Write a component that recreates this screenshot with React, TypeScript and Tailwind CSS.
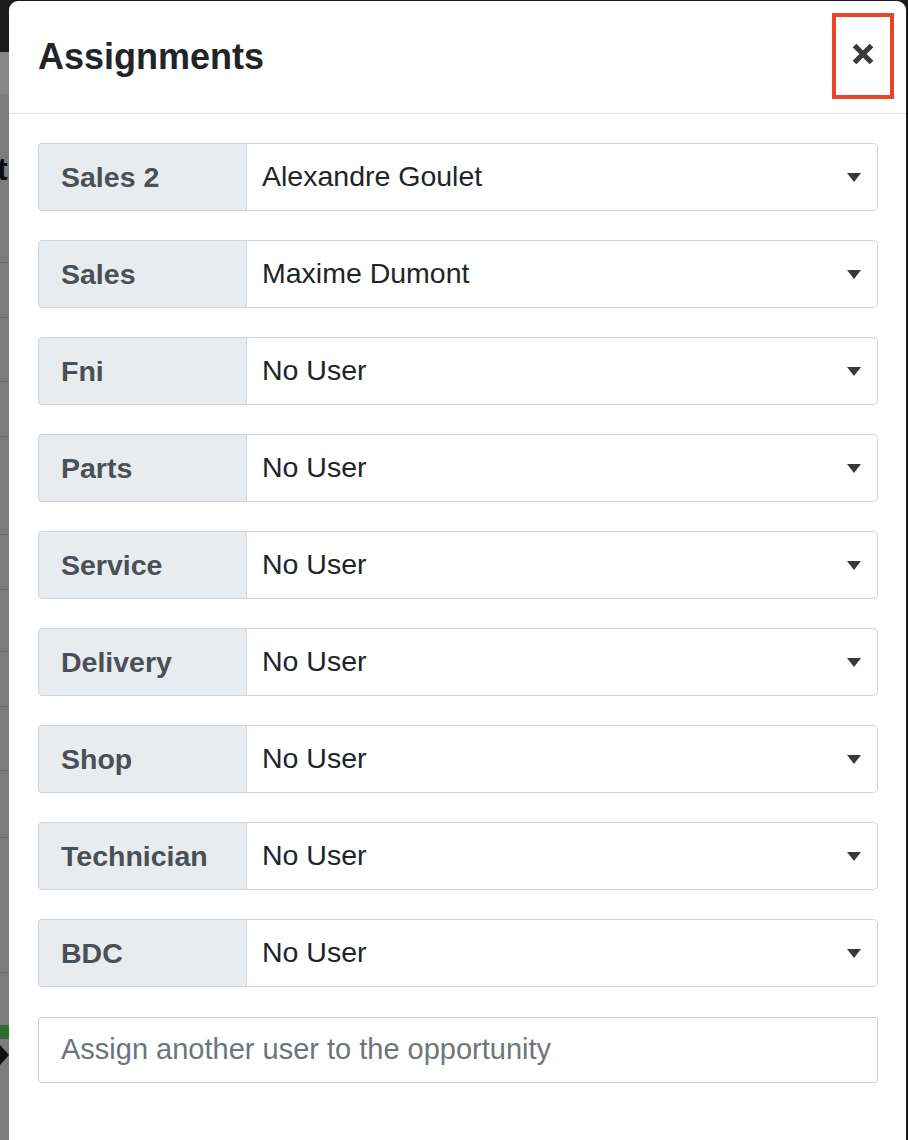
import React from "react";

const rows: { label: string; value: string }[] = [
  { label: "Sales 2", value: "Alexandre Goulet" },
  { label: "Sales", value: "Maxime Dumont" },
  { label: "Fni", value: "No User" },
  { label: "Parts", value: "No User" },
  { label: "Service", value: "No User" },
  { label: "Delivery", value: "No User" },
  { label: "Shop", value: "No User" },
  { label: "Technician", value: "No User" },
  { label: "BDC", value: "No User" },
];

// segments of the page visible behind the backdrop, left of the modal
const strip: { h: number; cls: string; txt?: string }[] = [
  { h: 52, cls: "bg-[#1c1b19]" },
  { h: 42, cls: "bg-[#878787]" },
  { h: 169, cls: "bg-[#7c7c7c] border-b border-[#6a6a6a]", txt: "t" },
  { h: 55, cls: "bg-[#7c7c7c] border-b border-[#6a6a6a]" },
  { h: 64, cls: "bg-[#7c7c7c] border-b border-[#6a6a6a]" },
  { h: 55, cls: "bg-[#7c7c7c] border-b border-[#6a6a6a]" },
  { h: 98, cls: "bg-[#7c7c7c] border-b border-[#6a6a6a]" },
  { h: 55, cls: "bg-[#7c7c7c] border-b border-[#6a6a6a]" },
  { h: 62, cls: "bg-[#7c7c7c] border-b border-[#6a6a6a]" },
  { h: 55, cls: "bg-[#7c7c7c] border-b border-[#6a6a6a]" },
  { h: 64, cls: "bg-[#7c7c7c] border-b border-[#6a6a6a]" },
  { h: 67, cls: "bg-[#7c7c7c] border-b border-[#6a6a6a]" },
  { h: 135, cls: "bg-[#7c7c7c] border-b border-[#6a6a6a]" },
  { h: 52, cls: "bg-[#7c7c7c]" },
  { h: 14, cls: "bg-[#2f6b2f]" },
  { h: 6, cls: "bg-[#7c7c7c]" },
  { h: 20, cls: "bg-[#111] [clip-path:polygon(0_0,100%_50%,0_100%)]" },
  { h: 80, cls: "bg-[#7c7c7c]" },
];

function Caret() {
  return (
    <svg width="14" height="9" viewBox="0 0 14 9" className="shrink-0">
      <path d="M0 0 L14 0 L7 9 Z" fill="#343a40" />
    </svg>
  );
}

function CloseIcon() {
  return (
    <svg width="24" height="24" viewBox="0 0 24 24">
      <path d="M3.5 3.5 L20.5 20.5 M20.5 3.5 L3.5 20.5" stroke="#3a3a3a" strokeWidth="5.2" strokeLinecap="butt" />
    </svg>
  );
}

export default function App() {
  return (
    <div
      className="w-[908px] h-[1140px] overflow-hidden bg-[#1c1b19] flex items-start"
      style={{ fontFamily: '"Liberation Sans", Arial, Helvetica, sans-serif' }}
    >
      <div className="w-[9px] shrink-0 flex flex-col bg-[#7c7c7c] overflow-hidden">
        {strip.map((s, i) => (
          <div
            key={i}
            className={`${s.cls} shrink-0 overflow-hidden flex items-start text-[32px] font-bold leading-none text-[#0c0c0c]`}
            style={{ height: s.h }}
          >
            {s.txt ? <span className="mt-[59px] -ml-[3px]">{s.txt}</span> : null}
          </div>
        ))}
      </div>

      {/* modal */}
      <div className="mt-[1px] w-[897px] h-[1170px] shrink-0 bg-white rounded-[9px] flex flex-col">
        <div className="h-[113px] border-b border-[#dee2e6] flex items-center justify-between pl-[29px] pr-[12px]">
          <h5 className="text-[36px] font-bold text-[#212529] leading-none -mt-[1px]">Assignments</h5>
          <div className="w-[62px] h-[86px] border-[4px] border-[#e8452c] flex items-center justify-center -mt-[3px]">
            <div className="-mt-[4px]">
              <CloseIcon />
            </div>
          </div>
        </div>
        <div className="pt-[29px] pl-[29px] pr-[28px] flex flex-col gap-[29px]">
          {rows.map((r) => (
            <div key={r.label} className="flex h-[68px]">
              <div className="w-[209px] shrink-0 flex items-center pl-[22px] bg-[#e9ecef] border border-[#ced4da] rounded-l-[4px] text-[28.5px] font-bold text-[#495057]">
                {r.label}
              </div>
              <div className="flex-1 flex items-center justify-between pl-[15px] pr-[16px] border border-l-0 border-[#ced4da] rounded-r-[5px] text-[28.5px] text-[#212529]">
                <span className="-mt-[2px]">{r.value}</span>
                <Caret />
              </div>
            </div>
          ))}
          <div className="h-[66px] mt-[1px] flex items-center pl-[22px] border border-[#cfcfcf] rounded-[3px] text-[29px] text-[#6c757d]">
            Assign another user to the opportunity
          </div>
        </div>
      </div>
    </div>
  );
}
